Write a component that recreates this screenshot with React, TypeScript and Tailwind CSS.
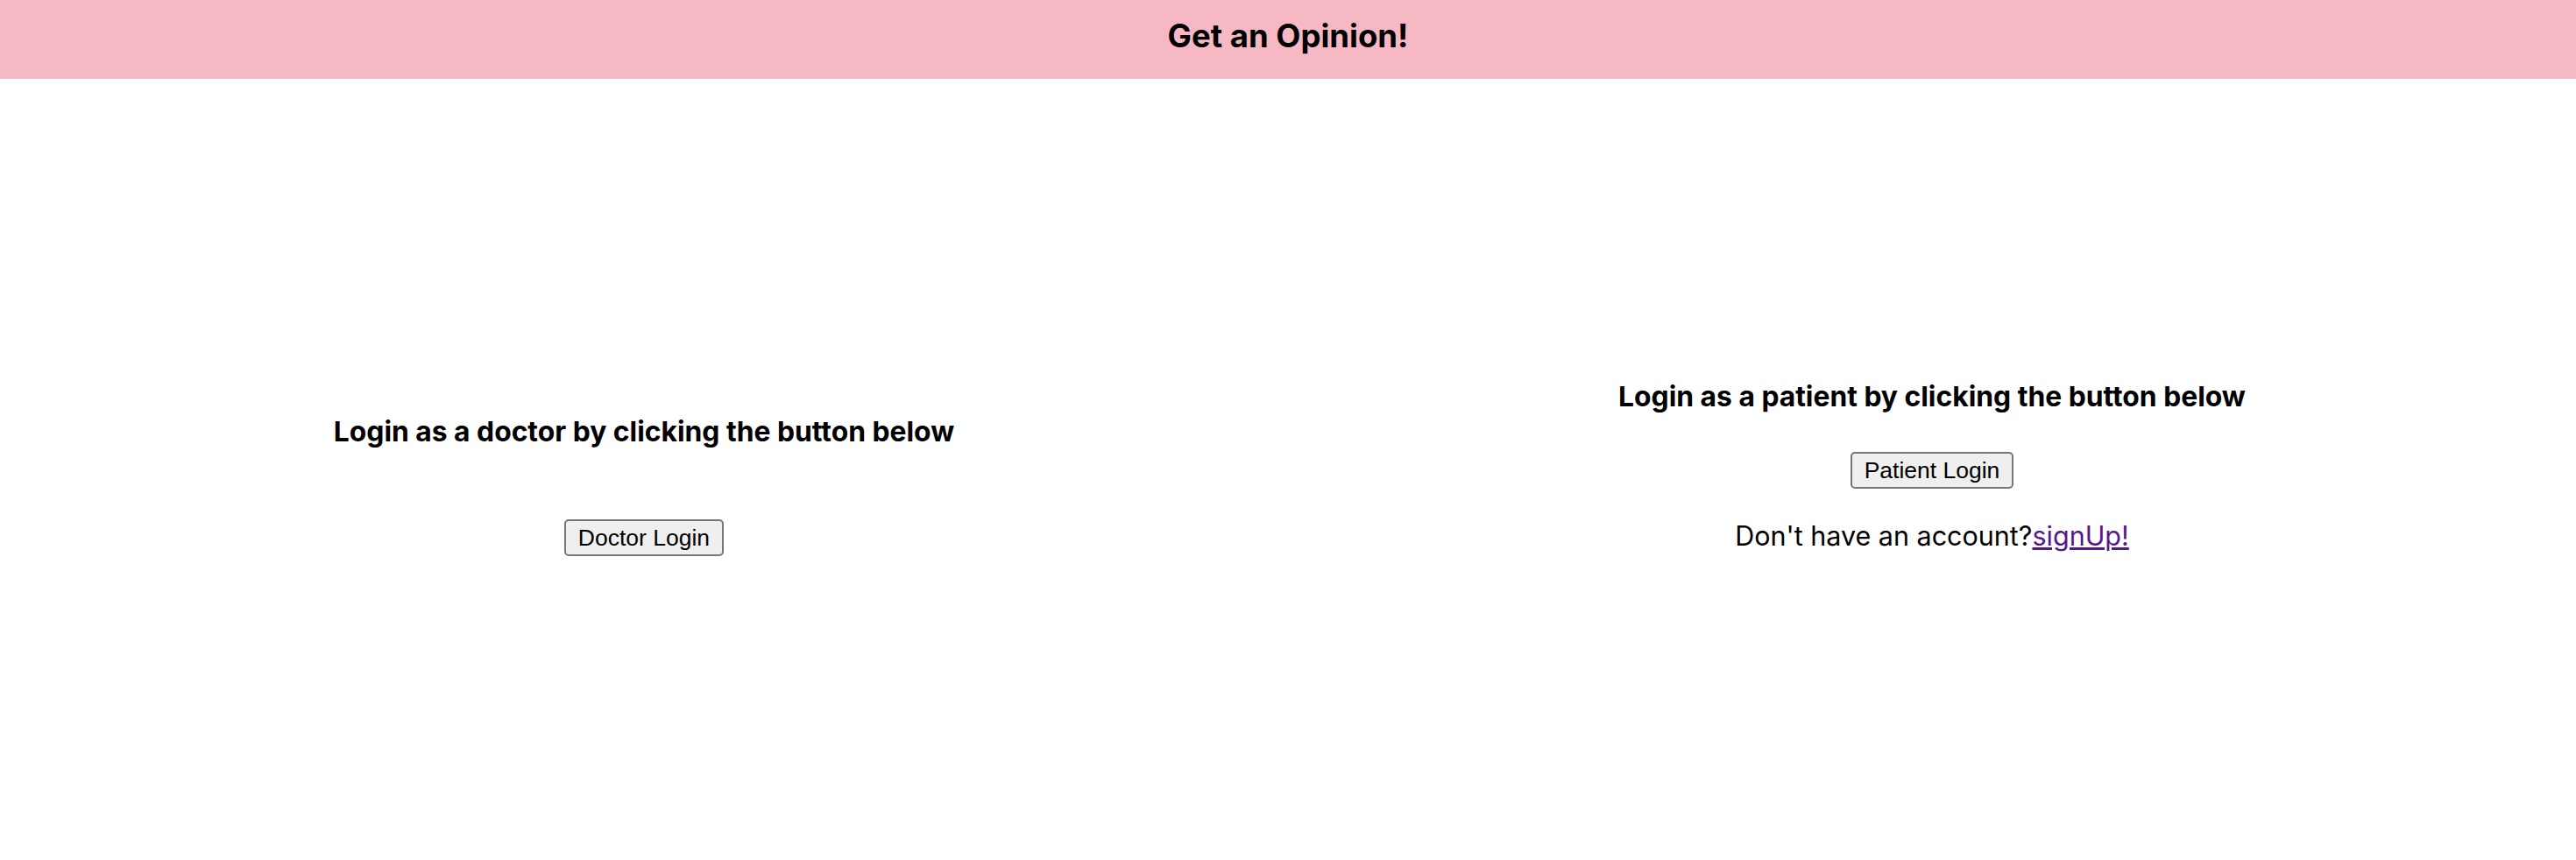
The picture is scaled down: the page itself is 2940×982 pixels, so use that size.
import React from "react";

const sans = "font-['Inter','Noto_Sans',sans-serif]";

function LoginButton({ label }: { label: string }) {
  return (
    <button
      type="button"
      className="rounded-[5px] border-2 border-[#767676] bg-[#efefef] px-[14px] py-[4px] font-['Liberation_Sans',Arial,sans-serif] text-[26.5px] leading-[30px] text-black"
    >
      {label}
    </button>
  );
}

export default function App() {
  return (
    <div className={`min-h-[982px] w-full bg-white text-black ${sans}`}>
      <header className="h-[90px] bg-[#f6b9c4] pt-[19px] text-center">
        <h1 className="text-[36.5px] font-bold leading-[44px]">Get an Opinion!</h1>
      </header>

      <main className="grid grid-cols-2">
        <section className="flex flex-col items-center pt-[384px]">
          <h2 className="text-[31.8px] font-bold leading-[38px]">
            Login as a doctor by clicking the button below
          </h2>
          <div className="mt-[81px]">
            <LoginButton label="Doctor Login" />
          </div>
        </section>

        <section className="flex flex-col items-center pt-[344px]">
          <h2 className="text-[31.8px] font-bold leading-[38px]">
            Login as a patient by clicking the button below
          </h2>
          <div className="mt-[44px]">
            <LoginButton label="Patient Login" />
          </div>
          <p className="mt-[36px] text-[30.5px] leading-[36px]">
            Don't have an account?
            <a href="#" className="text-[#551a8b] underline">
              signUp!
            </a>
          </p>
        </section>
      </main>
    </div>
  );
}
